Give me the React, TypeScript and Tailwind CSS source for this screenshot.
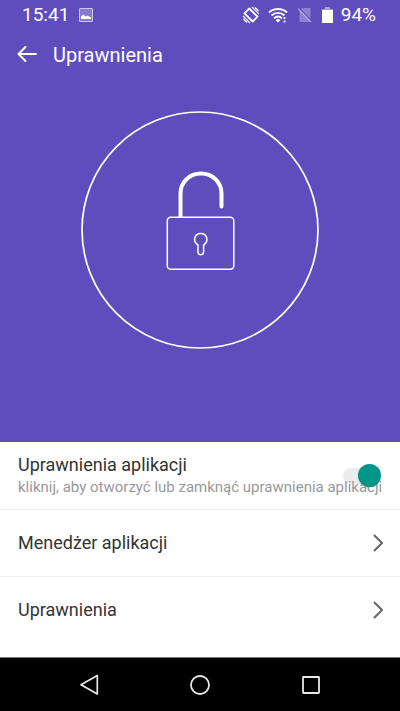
import { useState } from "react";

const LINKS = ["Menedżer aplikacji", "Uprawnienia"];

function StatusBar() {
  return (
    <div className="flex h-[30px] items-center pl-[22px] pr-6 text-[19px] leading-[30px]">
      <span>15:41</span>
      <svg className="ml-[10px] size-[14px]" viewBox="0 0 14 14" aria-hidden="true">
        <rect x="0.5" y="0.5" width="13" height="13" rx="0.5" fill="#fff" fillOpacity="0.25" stroke="#fff" strokeOpacity="0.65" />
        <path d="M2 11V8.500L4.500 6.500L6.500 8.500L8.500 7.500L12 9.500V11Z" fill="#fff" />
      </svg>
      <div className="ml-auto flex items-center">
        <svg className="size-[18px]" viewBox="0 0 18 18" fill="none" stroke="#fff" aria-hidden="true">
          <path d="M7.300 2.500L15.500 10.700L10.700 15.500L2.500 7.300Z" strokeWidth="1.800" strokeLinejoin="round" />
          <path d="M10 1L17 8M13 1.500L16.500 5M1 10L8 17M1.500 13L5 16.500" strokeWidth="1.200" />
        </svg>
        <svg className="ml-2 h-[16px] w-[20px]" viewBox="0 0 20 16" fill="none" stroke="#fff" strokeWidth="1.800" aria-hidden="true">
          <path d="M1 5.500C6 0.800 14 0.800 19 5.500" />
          <path d="M3.500 8.500C7.300 5 12.700 5 16.500 8.500" />
          <path d="M6 11.300C8.500 9 11.500 9 14 11.300" />
          <path d="M7.500 13.200L10 11.500L12.500 13.200L10 15.500Z" fill="#fff" stroke="none" />
          <path d="M16.500 10V12M16.500 13.500V15.500" />
        </svg>
        <svg className="ml-[9px] size-[16px]" viewBox="0 0 16 16" aria-hidden="true">
          <path d="M5.500 1H13.500V15H2.500V4Z" fill="#fff" fillOpacity="0.3" />
          <path d="M2.500 1.500L15 14.500" stroke="#5f4dbe" strokeWidth="1.500" />
          <path d="M1 1.500L14 15" stroke="#fff" strokeOpacity="0.4" strokeWidth="1.300" />
        </svg>
        <svg className="ml-[9px] h-[16px] w-[11px]" viewBox="0 0 11 16" aria-hidden="true">
          <path d="M3 0H8V2H11V4H0V2H3Z" fill="#fff" fillOpacity="0.45" />
          <path d="M0 3H11V16H0Z" fill="#fff" />
        </svg>
        <span className="ml-2">94%</span>
      </div>
    </div>
  );
}

function Padlock() {
  return (
    <svg className="size-[238px]" viewBox="0 0 238 238" fill="none" stroke="#fff" aria-hidden="true">
      <circle cx="119" cy="119" r="118" strokeWidth="1.700" />
      <path d="M99.500 106V82.500C99.500 71 108.500 62.500 120 62.500S140.500 71 140.500 82.500V95.500" strokeWidth="4" strokeLinecap="round" />
      <rect x="86.300" y="106.300" width="66.500" height="52" rx="3.500" fill="#5f4dbe" strokeWidth="1.500" />
      <path d="M117 134C111.200 130.500 113.400 122.500 119.800 122.500S128.200 130.500 122.600 134V141C122.600 144.500 117 144.500 117 141Z" strokeWidth="1.500" strokeLinejoin="round" />
    </svg>
  );
}

function NavBar() {
  return (
    <nav className="flex h-[54px] items-center justify-center gap-[87px] border-t border-[#777] bg-black">
      <button type="button" aria-label="Wstecz">
        <svg className="size-6" viewBox="0 0 24 24" fill="none" stroke="#e8e8e8" strokeWidth="1.700" aria-hidden="true">
          <path d="M20.300 2.500V21L4 11.700Z" strokeLinejoin="round" />
        </svg>
      </button>
      <button type="button" aria-label="Ekran główny">
        <svg className="size-6" viewBox="0 0 24 24" fill="none" stroke="#e8e8e8" strokeWidth="1.800" aria-hidden="true">
          <circle cx="12" cy="12" r="9" />
        </svg>
      </button>
      <button type="button" aria-label="Ostatnie">
        <svg className="size-6" viewBox="0 0 24 24" fill="none" stroke="#e8e8e8" strokeWidth="1.800" aria-hidden="true">
          <rect x="4" y="4" width="16" height="16" rx="0.500" />
        </svg>
      </button>
    </nav>
  );
}

export default function App() {
  const [enabled, setEnabled] = useState(true);

  return (
    <div className="flex min-h-screen flex-col bg-white font-[Roboto,sans-serif] text-[#333]">
      <div className="flex-1 bg-[#5f4dbe] pb-[93px] text-white">
        <StatusBar />
        <header className="flex h-[50px] items-center pl-[17px]">
          <button type="button" aria-label="Wróć">
            <svg className="h-[18px] w-[20px]" viewBox="0 0 20 18" fill="none" stroke="#fff" strokeWidth="2" strokeLinecap="round" strokeLinejoin="round" aria-hidden="true">
              <path d="M19 8H1.500M8.500 1L1.500 8L8.500 15" />
            </svg>
          </button>
          <h1 className="ml-4 text-[20px] leading-6">Uprawnienia</h1>
        </header>
        <div className="flex justify-center pt-[31px]">
          <Padlock />
        </div>
      </div>

      <main>
        <label className="relative block h-[68px] cursor-pointer overflow-hidden border-b border-[#ececec] pl-[18px] pt-[11px]">
          <span className="block text-[18px] leading-[23px]">Uprawnienia aplikacji</span>
          <span className="relative z-10 block whitespace-nowrap text-[15px] leading-[22px] text-[#999]">
            kliknij, aby otworzyć lub zamknąć uprawnienia aplikacji
          </span>
          <input
            type="checkbox"
            role="switch"
            aria-label="Uprawnienia aplikacji"
            className="peer sr-only"
            checked={enabled}
            onChange={(e) => setEnabled(e.target.checked)}
          />
          <span className="absolute right-5 top-[26px] h-4 w-[37px] rounded-full bg-[#ebeced]" />
          <span className="absolute right-[34px] top-[22px] z-20 size-[23px] rounded-full bg-[#b9b9b9] shadow-sm peer-checked:right-[19px] peer-checked:bg-[#029688]" />
        </label>
        <ul className="pb-[14px]">
          {LINKS.map((name) => (
            <li key={name} className="border-b border-[#ececec] last:border-b-0">
              <a href="#" className="flex h-[66px] items-center justify-between pl-[18px] pr-[17px] text-[18px] leading-6">
                {name}
                <svg className="h-[18px] w-[10px]" viewBox="0 0 10 18" fill="none" stroke="#666" strokeWidth="2" aria-hidden="true">
                  <path d="M1 1L9 9L1 17" />
                </svg>
              </a>
            </li>
          ))}
        </ul>
      </main>

      <NavBar />
    </div>
  );
}
